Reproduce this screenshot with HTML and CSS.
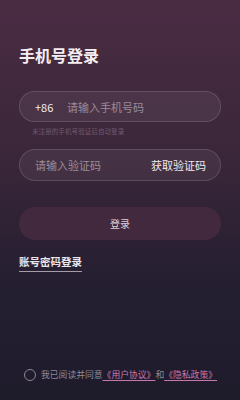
FILE: index.html
```html
<!DOCTYPE html>
<html lang="zh">
<head>
<meta charset="utf-8">
<link rel="stylesheet" href="styles.css">
</head>
<body>
<div class="page">
  <h1 class="title">手机号登录</h1>
  <div class="field">
    <span class="prefix">+86</span>
    <span class="placeholder">请输入手机号码</span>
  </div>
  <p class="hint">未注册的手机号验证后自动登录</p>
  <div class="field field-code">
    <span class="placeholder">请输入验证码</span>
    <span class="get-code">获取验证码</span>
  </div>
  <div class="login-btn">登录</div>
  <div class="alt-login"><span class="alt-link">账号密码登录</span></div>
  <div class="agree">
    <span class="radio"></span>
    <span class="agree-text">我已阅读并同意<span class="link">《用户协议》</span>和<span class="link">《隐私政策》</span></span>
  </div>
</div>
</body>
</html>
```
FILE: styles.css
```css
* { box-sizing: border-box; }
html, body { margin: 0; padding: 0; }
body {
  width: 240px;
  height: 400px;
  background: linear-gradient(180deg, #4a2c43 0%, #3a2639 40%, #241e31 72%, #1e1b2b 100%);
  font-family: "Noto Sans CJK SC", "Noto Sans", sans-serif;
  color: #fff;
}
.page {
  height: 400px;
  padding: 45px 19px 19px;
  display: flex;
  flex-direction: column;
}
.title {
  margin: 0;
  font-size: 16px;
  line-height: 20px;
  font-weight: 700;
  color: #f4eef2;
}
.field {
  margin-top: 26px;
  height: 31px;
  border-radius: 16px;
  background: rgba(255, 255, 255, 0.06);
  border: 1px solid rgba(255, 255, 255, 0.13);
  display: flex;
  align-items: center;
  padding: 0 14px 0 15px;
  font-size: 11px;
}
.prefix {
  color: #f2ecf0;
  width: 32px;
}
.placeholder { color: #9a8b99; }
.hint {
  margin: 4px 0 0 13px;
  font-size: 6.6px;
  line-height: 10px;
  color: #6f5a6d;
}
.field-code {
  margin-top: 13px;
  height: 32px;
  justify-content: space-between;
}
.get-code { color: #f0eaee; }
.login-btn {
  margin-top: 26px;
  height: 33px;
  border-radius: 17px;
  background: #43293d;
  display: flex;
  align-items: center;
  justify-content: center;
  font-size: 10px;
  color: #ddd2da;
}
.alt-login {
  margin-top: 15px;
  display: flex;
}
.alt-link {
  font-size: 10.5px;
  line-height: 14px;
  font-weight: 700;
  color: #ece6ea;
  padding-bottom: 2px;
  border-bottom: 1px solid #a59ca6;
}
.agree {
  margin-top: auto;
  display: flex;
  align-items: center;
  padding-left: 5px;
  font-size: 8.8px;
  line-height: 12px;
  color: #8e8794;
}
.radio {
  width: 12px;
  height: 12px;
  border: 1.3px solid #8d8793;
  border-radius: 50%;
  margin-right: 5px;
}
.link {
  color: #c777ad;
  text-decoration: underline;
  text-underline-offset: 2px;
}
```
